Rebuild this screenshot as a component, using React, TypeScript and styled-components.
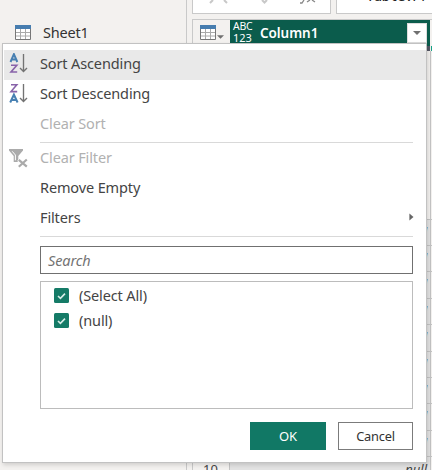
import React from 'react';
import styled, { createGlobalStyle } from 'styled-components';

const Global = createGlobalStyle`
  * { box-sizing: border-box; }
  body { margin: 0; background: #fff; font-family: "Noto Sans", "Open Sans", sans-serif; }
`;

const Page = styled.div`
  position: relative;
  width: 434px;
  height: 476px;
  overflow: hidden;
  background: #fff;
`;
const Workspace = styled.div`
  display: grid;
  grid-template-columns: 187px 245px;
  width: 432px;
  height: 470px;
  overflow: hidden;
  background: #f3f1ef;
`;
const Queries = styled.aside`
  border-right: 1px solid #c9c9c9;
  padding: 23px 0 0 15px;
`;
const Query = styled.div`
  display: flex;
  align-items: center;
  gap: 12px;
  height: 18px;
  color: #333;
`;
const Main = styled.main`
  display: flex;
  flex-direction: column;
  padding-left: 5px;
  min-width: 0;
`;
const FormulaBar = styled.div`
  display: flex;
  gap: 5px;
  height: 14px;
`;
const FormulaBox = styled.div<{ $w: number }>`
  display: flex;
  align-items: flex-start;
  flex: 0 0 ${p => p.$w}px;
  height: 14px;
  border: 1px solid #c9c9c9;
  border-top: 0;
  background: #fff;
`;
const FormulaText = styled.div`
  margin: -12px 0 0 29px;
  font: 14px/16px "DejaVu Sans Mono", monospace;
  letter-spacing: -0.7px;
  color: #222;
  white-space: pre;
`;
const Grid = styled.div`
  display: flex;
  flex-direction: column;
  flex: 1;
  margin-top: 5px;
  border-left: 1px solid #c9c9c9;
  border-top: 1px solid #c9c9c9;
`;
const HeaderRow = styled.div`
  display: grid;
  grid-template-columns: 37px 200px 1fr;
  flex: 0 0 26px;
`;
const Corner = styled.div`
  display: flex;
  align-items: center;
  padding: 0 0 1px 7px;
  gap: 1px;
  svg + svg { margin-top: 9px; }
`;
const ColumnHead = styled.div`
  display: flex;
  align-items: center;
  height: 26px;
  padding: 0 3px 0 3px;
  background: #0b5c4c;
  color: #fff;
`;
const TypeTag = styled.div`
  display: flex;
  flex-direction: column;
  width: 27px;
  margin-top: -2px;
  font-size: 10.5px;
  line-height: 11px;
  letter-spacing: -0.3px;
`;
const TypeNumber = styled.span`
  font-size: 11px;
  letter-spacing: 0;
`;
const DropButton = styled.div`
  display: flex;
  align-items: center;
  justify-content: center;
  width: 20px;
  height: 20px;
  margin-left: auto;
  background: #fff;
  border: 1px solid #ddd;
`;
const QualityRow = styled.div`
  display: flex;
  justify-content: flex-end;
  flex: 0 0 5px;
`;
const Quality = styled.div<{ $c: string; $w: number }>`
  width: ${p => p.$w}px;
  margin-left: 1px;
  background: ${p => p.$c};
`;
const Profile = styled.div`
  flex: 0 0 168px;
  border-right: 1px solid #c5c5c5;
  margin-right: 1px;
`;
const DataRow = styled.div<{ $h: number }>`
  display: grid;
  grid-template-columns: 37px 201px 1fr;
  flex: 0 0 ${p => p.$h}px;
  min-height: 0;
  border-top: 1px solid #c3c3c3;
  font-size: 13px;
  line-height: 25px;
  color: #444;
`;
const Cell = styled.div<{ $value?: boolean }>`
  border-right: 1px solid #c3c3c3;
  background: ${p => (p.$value ? '#e2e2e2' : 'transparent')};
  text-align: ${p => (p.$value ? 'right' : 'left')};
  padding: ${p => (p.$value ? '0 3px 0 0' : '0 0 0 10px')};
  font-style: ${p => (p.$value ? 'italic' : 'normal')};
`;

const Menu = styled.div`
  position: absolute;
  left: 2px;
  top: 43px;
  width: 425px;
  height: 420px;
  padding: 6px 0 0 1px;
  background: #fff;
  border: 1px solid #c2c2c2;
  box-shadow: 1px 2px 4px rgba(0, 0, 0, 0.14);
`;
const Item = styled.div<{ $hot?: boolean; $off?: boolean }>`
  display: grid;
  grid-template-columns: 36px 1fr 17px;
  align-items: center;
  height: 30px;
  padding-bottom: 4px;
  background: ${p => (p.$hot ? '#e9e9e9' : 'transparent')};
  color: ${p => (p.$off ? '#b1b1b1' : '#444')};
`;
const IconSlot = styled.div`
  display: flex;
  padding: 1px 0 0 5px;
`;
const Label = styled.span<{ $size?: number; $track?: number; $bold?: boolean }>`
  font-size: ${p => p.$size ?? 14.5}px;
  letter-spacing: ${p => p.$track ?? -0.13}px;
  font-weight: ${p => (p.$bold ? 600 : 400)};
  line-height: 20px;
  white-space: nowrap;
`;
const Divider = styled.div<{ $after: number }>`
  height: 1px;
  margin: 2px 13px ${p => p.$after}px 36px;
  background: #d9d9d9;
`;
const Search = styled.div`
  display: flex;
  align-items: center;
  height: 28px;
  margin: 0 13px 7px 36px;
  padding: 0 0 1px 7px;
  border: 1px solid #707070;
  color: #737373;
  font-style: italic;
`;
const Values = styled.div`
  height: 128px;
  margin: 0 13px 0 36px;
  padding: 1px 0 0 13px;
  border: 1px solid #bcbcbc;
`;
const Value = styled.div`
  display: flex;
  align-items: center;
  gap: 10px;
  height: 25px;
  padding-bottom: 2px;
  color: #444;
`;
const Check = styled.span`
  display: flex;
  align-items: center;
  justify-content: center;
  width: 15px;
  height: 15px;
  margin-top: 2px;
  border-radius: 1.5px;
  background: #157b67;
`;
const Actions = styled.div`
  display: flex;
  justify-content: flex-end;
  gap: 12px;
  padding: 13px 13px 0 0;
`;
const Button = styled.button<{ $primary?: boolean }>`
  display: flex;
  align-items: center;
  justify-content: center;
  width: ${p => (p.$primary ? 76 : 75)}px;
  height: 28px;
  padding: 0 0 1px;
  border: 1px solid ${p => (p.$primary ? '#117865' : '#7b7b7b')};
  background: ${p => (p.$primary ? '#117865' : '#fff')};
  color: ${p => (p.$primary ? '#fff' : '#333')};
  font-family: inherit;
`;

const TableIcon = () => (
  <svg width="16" height="15" viewBox="0 0 16 15">
    <path d="M.5 1h15v13.5H.5z" fill="#fff" stroke="#777" />
    <path d="M5.5 4v10M10.5 4v10M1 7.5h14M1 11h14" stroke="#aaa" />
    <path d="M0 0h16v4H0z" fill="#477daf" />
  </svg>
);
const Down = ({ w = 8 }: { w?: number }) => (
  <svg width={w} height="4" viewBox="0 0 8 4"><path d="M0 0h8L4 4z" fill="#707070" /></svg>
);
const SortIcon = ({ desc }: { desc?: boolean }) => (
  <svg width="20" height="21" viewBox="0 0 20 21" fill="none">
    <path d={desc ? 'M1.2 19.5L4.9 11.7L8.6 19.5M2.5 17h4.8' : 'M1.5 9L4.9 1.2L8.3 9M2.7 6.5h4.4'} stroke="#4880b2" strokeWidth="2" />
    <path d={desc ? 'M2 1.8h5.8L2 8.6h6.2' : 'M2 12.3h5.8L2 19h6.2'} stroke="#8863a9" strokeWidth="1.6" />
    <path d="M14.5 1v17.5M11 15l3.5 3.5L18 15" stroke="#737373" strokeWidth="1.35" />
  </svg>
);
const ClearIcon = () => (
  <svg width="20" height="20" viewBox="0 0 20 20" fill="none">
    <path d="M0 1h14v1.5L9.3 8v6H4.7V8L0 2.5z" fill="#ababab" />
    <path d="M3.2 3.3L6.4 7v5.3" stroke="#fff" />
    <path d="M9.5 11.5l8.5 7.5M18.5 11l-9 8" stroke="#fff" strokeWidth="4" />
    <path d="M9.8 11.8l8 6.8M17.8 11.5l-8 7.2" stroke="#aaa" strokeWidth="2.2" />
  </svg>
);
const FormulaIcons = () => (
  <svg width="136" height="4" viewBox="0 0 136 4" fill="none">
    <path d="M17 3l3-3M34 3l-3-3" stroke="#c8c8c8" strokeWidth="2" />
    <path d="M69 0l2.5 2.5L74 0" stroke="#c8c8c8" strokeWidth="2" />
    <path d="M107 3h2l2-3M114 2l3-2M119 0l3 2" stroke="#888" strokeWidth="1.3" />
  </svg>
);
const Tick = () => (
  <svg width="9" height="8" viewBox="0 0 9 8" fill="none"><path d="M1 4l2.4 2.3L8 1.6" stroke="#d8eee9" strokeWidth="1.6" /></svg>
);
const Submenu = () => (
  <svg width="5" height="8" viewBox="0 0 5 8"><path d="M.4 .5L4.5 4L.4 7.5z" fill="#666" /></svg>
);

const rowHeights = [26, 26, 27, 26, 27, 26, 26, 27, 26, 26];

export default function App() {
  return (
    <Page>
      <Global />
      <Workspace>
        <Queries>
          <Query><TableIcon /><Label $track={-0.2}>Sheet1</Label></Query>
        </Queries>
        <Main>
          <FormulaBar>
            <FormulaBox $w={139}><FormulaIcons /></FormulaBox>
            <FormulaBox $w={110}><FormulaText>Table.Pr</FormulaText></FormulaBox>
          </FormulaBar>
          <Grid>
            <HeaderRow>
              <Corner><TableIcon /><Down w={7} /></Corner>
              <ColumnHead>
                <TypeTag><span>ABC</span><TypeNumber>123</TypeNumber></TypeTag>
                <Label $bold $size={13.5} $track={-0.05}>Column1</Label>
                <DropButton><Down /></DropButton>
              </ColumnHead>
            </HeaderRow>
            <QualityRow><Quality $w={3} $c="#555866" /><Quality $w={1} $c="#16a085" /></QualityRow>
            <Profile />
            {rowHeights.map((h, i) => (
              <DataRow key={i} $h={h}><Cell>{i + 1}</Cell><Cell $value>null</Cell></DataRow>
            ))}
          </Grid>
        </Main>
      </Workspace>
      <Menu>
        <Item $hot><IconSlot><SortIcon /></IconSlot><Label>Sort Ascending</Label></Item>
        <Item><IconSlot><SortIcon desc /></IconSlot><Label>Sort Descending</Label></Item>
        <Item $off><IconSlot /><Label>Clear Sort</Label></Item>
        <Divider $after={1} />
        <Item $off><IconSlot><ClearIcon /></IconSlot><Label>Clear Filter</Label></Item>
        <Item><IconSlot /><Label>Remove Empty</Label></Item>
        <Item><IconSlot /><Label>Filters</Label><Submenu /></Item>
        <Divider $after={9} />
        <Search><Label>Search</Label></Search>
        <Values>
          <Value><Check><Tick /></Check><Label>(Select All)</Label></Value>
          <Value><Check><Tick /></Check><Label>(null)</Label></Value>
        </Values>
        <Actions>
          <Button $primary><Label $size={13}>OK</Label></Button>
          <Button><Label $size={12.8} $track={-0.2}>Cancel</Label></Button>
        </Actions>
      </Menu>
    </Page>
  );
}
